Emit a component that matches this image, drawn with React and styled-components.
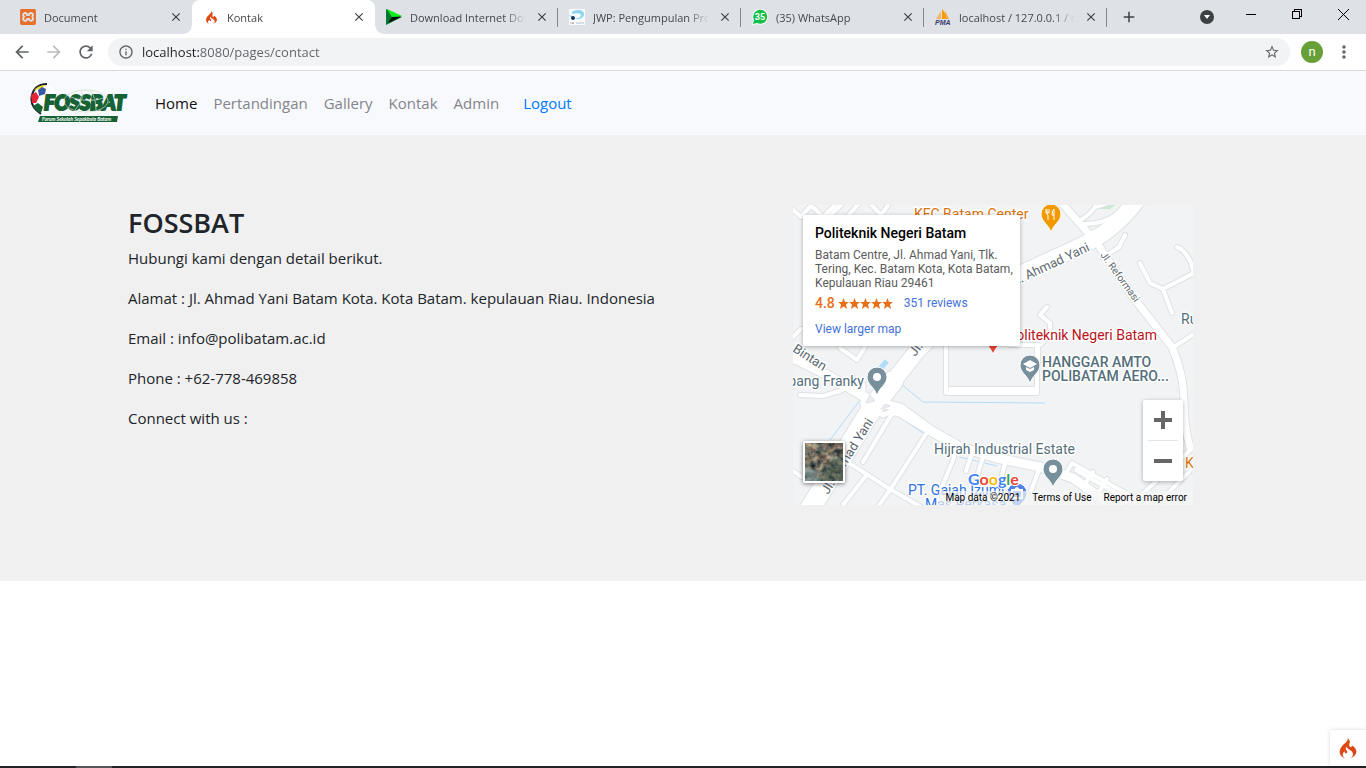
import React from "react";
import styled, { createGlobalStyle, css } from "styled-components";
import { SiCodeigniter, SiXampp } from "react-icons/si";
import {
  MdArrowBack,
  MdArrowForward,
  MdRefresh,
  MdInfoOutline,
  MdStarBorder,
  MdMoreVert,
  MdClose,
  MdAdd,
} from "react-icons/md";

const ui = '"Open Sans", "Noto Sans", sans-serif';
const mapFont = 'Roboto, "Liberation Sans", sans-serif';

const GlobalStyle = createGlobalStyle`
  *, *::before, *::after { box-sizing: border-box; }
  body { margin: 0; background: #fff; font-family: ${ui}; color: #212529; }
  button { padding: 0; border: 0; background: none; font: inherit; color: inherit; cursor: pointer; }
  a { text-decoration: none; }
  h1, p { margin: 0; }
`;

const Page = styled.div`
  display: flex;
  flex-direction: column;
  min-height: 100vh;
`;

/* ---------- browser frame ---------- */

const TabStrip = styled.div`
  display: flex;
  height: 34px;
  padding-left: 9px;
  background: #dee1e6;
`;

const Tab = styled.div`
  position: relative;
  display: flex;
  align-items: center;
  flex: 0 1 183px;
  min-width: 0;
  gap: 8px;
  padding: 0 8px 0 11px;
  font-size: 11px;
  color: #45484c;
  ${(p) =>
    p.$divided &&
    css`
      &::after {
        content: "";
        position: absolute;
        right: 0;
        top: 8px;
        width: 1px;
        height: 19px;
        background: #85888d;
      }
    `}
  ${(p) =>
    p.$active &&
    css`
      background: #fff;
      border-radius: 8px 8px 0 0;
      &::before,
      &::after {
        content: "";
        position: absolute;
        bottom: 0;
        width: 8px;
        height: 8px;
      }
      &::before {
        left: -8px;
        background: radial-gradient(circle at 0 0, transparent 7px, #fff 8px);
      }
      &::after {
        right: -8px;
        background: radial-gradient(circle at 100% 0, transparent 7px, #fff 8px);
      }
    `}
`;

const Favicon = styled.span`
  display: flex;
  flex: none;
  align-items: center;
  justify-content: center;
  width: 16px;
  height: 16px;
  font-size: ${(p) => p.$size || 16}px;
  color: ${(p) => p.$color || "inherit"};
`;

const TabTitle = styled.span`
  flex: 1;
  min-width: 0;
  overflow: hidden;
  white-space: nowrap;
  mask-image: linear-gradient(90deg, #000 calc(100% - 22px), transparent);
`;

const TabClose = styled.button`
  display: flex;
  flex: none;
  align-items: center;
  justify-content: center;
  width: 16px;
  height: 16px;
  font-size: 14px;
  color: #3c4043;
`;

const StripButton = styled.button`
  display: flex;
  align-items: center;
  justify-content: center;
  width: ${(p) => p.$width}px;
  height: ${(p) => p.$height || 34}px;
  font-size: 18px;
  color: #3c4043;
`;

const WindowControls = styled.div`
  display: flex;
  margin-left: auto;
`;

const Toolbar = styled.div`
  display: flex;
  align-items: center;
  height: 37px;
  padding: 0 6px;
  background: #fff;
  border-bottom: 1px solid #dadce0;
`;

const ToolButton = styled.button`
  display: flex;
  align-items: center;
  justify-content: center;
  width: 32px;
  height: 28px;
  font-size: 20px;
  color: ${(p) => (p.$faded ? "#babcbe" : "#5f6368")};
`;

const Omnibox = styled.div`
  display: flex;
  align-items: center;
  flex: 1;
  gap: 8px;
  height: 28px;
  margin-left: 6px;
  padding: 0 10px;
  border-radius: 14px;
  background: #f1f3f4;
  color: #5f6368;
  font-size: 16px;
`;

const Address = styled.input`
  flex: 1;
  min-width: 0;
  padding: 0;
  border: 0;
  outline: 0;
  font: 13px/20px ${ui};
  color: transparent;
  background: linear-gradient(90deg, #202124 57px, #5f6368 57px);
  background-clip: text;
`;

const Avatar = styled.button`
  width: 22px;
  height: 22px;
  margin: 0 5px 0 11px;
  border-radius: 50%;
  background: #689f38;
  color: #fff;
  font: 13px/20px ${mapFont};
`;

/* ---------- site ---------- */

const Navbar = styled.nav`
  display: flex;
  align-items: center;
  gap: 24px;
  height: 64px;
  padding: 0 30px;
  background: #f8f9fc;
`;

const NavList = styled.div`
  display: flex;
  gap: 16px;
`;

const NavLink = styled.a`
  font-size: 15px;
  line-height: 24px;
  color: ${(p) => p.$color || "#84858a"};
`;

const Contact = styled.main`
  padding: 70px 0 76px;
  background: #f0f0f0;
`;

const Container = styled.div`
  display: grid;
  grid-template-columns: 7fr 5fr;
  max-width: 1140px;
  margin: 0 auto;
`;

const Column = styled.div`
  min-width: 0;
  padding: 0 15px;
`;

const Heading = styled.h1`
  margin-bottom: 6px;
  font-size: 27px;
  font-weight: 600;
  line-height: 35px;
`;

const Line = styled.p`
  margin-bottom: 16px;
  font-size: 15px;
  line-height: 24px;
`;

const MapFrame = styled.section`
  position: relative;
  max-width: 400px;
  height: 300px;
  overflow: hidden;
  background: #f1f3f5;
  font-family: ${mapFont};
  & > svg {
    display: block;
  }
`;

const PlaceCard = styled.div`
  position: absolute;
  top: 10px;
  left: 10px;
  width: 217px;
  height: 131px;
  padding: 9px 0 0 12px;
  background: #fff;
  border-radius: 2px;
  box-shadow: 0 1px 4px rgba(0, 0, 0, 0.3);
  font-size: 12px;
  line-height: 14px;
  color: #5b5b5b;
`;

const PlaceName = styled.div`
  margin-bottom: 6px;
  font-size: 14px;
  font-weight: 500;
  line-height: 18px;
  color: #000;
`;

const Rating = styled.div`
  display: flex;
  align-items: center;
  margin: 6px 0 12px;
  color: #e7711b;
  font-size: 14px;
  font-weight: 500;
  svg {
    margin: 0 11px 0 3px;
  }
`;

const MapLink = styled.a`
  font-size: 12px;
  font-weight: 400;
  color: #4272db;
`;

const ZoomControl = styled.div`
  position: absolute;
  right: 10px;
  bottom: 24px;
  width: 40px;
  background: #fff;
  border-radius: 2px;
  box-shadow: 0 1px 4px rgba(0, 0, 0, 0.3);
`;

const ZoomButton = styled.button`
  display: flex;
  align-items: center;
  justify-content: center;
  width: 100%;
  height: 40px;
`;

const Divider = styled.div`
  height: 1px;
  margin: 0 5px;
  background: #e6e6e6;
`;

const Satellite = styled.button`
  position: absolute;
  left: 10px;
  bottom: 22px;
  width: 42px;
  height: 42px;
  border: 2px solid #fff;
  border-radius: 2px;
  overflow: hidden;
  box-shadow: 0 1px 4px rgba(0, 0, 0, 0.5);
`;

const Attribution = styled.div`
  position: absolute;
  right: 0;
  bottom: 0;
  display: flex;
  gap: 12px;
  padding: 0 6px;
  background: rgba(245, 245, 245, 0.7);
  font-size: 10px;
  line-height: 14px;
  color: #000;
  a {
    color: #000;
  }
`;

const Spacer = styled.div`
  flex: 1;
`;

const DebugButton = styled.button`
  position: fixed;
  right: 0;
  bottom: 2px;
  display: flex;
  align-items: center;
  justify-content: center;
  width: 36px;
  height: 36px;
  background: #fff;
  box-shadow: 0 0 4px rgba(0, 0, 0, 0.16);
  color: #dd4814;
  font-size: 20px;
`;

const Taskbar = styled.div`
  height: 2px;
  padding-left: 76px;
  background: #232428;
  &::before {
    content: "";
    display: block;
    width: 36px;
    height: 2px;
    background: #55565a;
  }
`;

/* ---------- drawings ---------- */

const IdmIcon = () => (
  <svg width="16" height="16" viewBox="0 0 16 16">
    <path d="M0 0 16 8 0 16Z" fill="#073" />
    <path d="M1 0 16 7 6 8Z" fill="#0bf019" />
    <path d="M2 14 6 8 15 8Z" fill="#050a05" />
  </svg>
);

const JwpIcon = () => (
  <svg width="16" height="16" viewBox="0 0 16 16">
    <rect width="16" height="16" fill="#f6fbfd" />
    <path d="M3 3C6 0 15 0 15 5c0 4-5 6-9 5 4-1 6-2 6-4S7 4 3 5Z" fill="#8dd3ee" />
    <path d="M0 6l4 1 1 2-4-1Z" fill="#a8dcf0" />
    <circle cx="4" cy="9" r="2" fill="#16355c" />
    <path d="M1 14h4M7 14h8" stroke="#b9bfd6" strokeWidth="1" />
    <path d="M3 14h2" stroke="#d9855c" />
  </svg>
);

const WhatsIcon = () => (
  <svg width="16" height="16" viewBox="0 0 16 16">
    <path d="M0 16 1 11A8 8 0 1 1 5 15Z" fill="#fff" />
    <path d="M1 15 2 11A7 7 0 1 1 5 14Z" fill="#12bf4a" />
    <text x="8" y="11" textAnchor="middle" fontFamily="Roboto" fontWeight="700" fontSize="9" fill="#fff">35</text>
  </svg>
);

const PmaIcon = () => (
  <svg width="16" height="16" viewBox="0 0 16 16">
    <path d="M1 10 6 2 6 10Z" fill="#f7b563" />
    <path d="M7 0 11 5 12 10 7 10Z" fill="#f89c0e" />
    <path d="M10 1 14 10 12 10Z" fill="#f6a94a" />
    <text x="0" y="16" fontFamily="Liberation Sans" fontWeight="700" fontStyle="italic" fontSize="7" fill="#383a70">PMA</text>
  </svg>
);

const Logo = () => (
  <svg width="101" height="40" viewBox="0 0 101 40" role="img" aria-label="Fossbat logo">
    <ellipse cx="14" cy="16" rx="13" ry="15" fill="#fff" />
    <path d="M17 1Q5 1 2 12T11 31" fill="none" stroke="#1d222d" strokeWidth="2" />
    <path d="M4 7Q9 2 16 2L10 6Z" fill="#e8dd23" />
    <path d="M8 7 12 4 16 6 15 11 9 13Z" fill="#3859aa" />
    <path d="M1 12 6 9 9 14 6 20 2 20Z" fill="#e62335" />
    <path d="M3 23 8 20 13 24 11 30Q6 29 3 23Z" fill="#166235" />
    <text
      x="14"
      y="27"
      fontFamily="Lato, Liberation Sans"
      fontWeight="900"
      fontStyle="italic"
      fontSize="20"
      fill="#166235"
      stroke="#166235"
      strokeWidth="2"
    >
      FOSSBAT
    </text>
    <g fill="none" stroke="#c9dccf" strokeWidth="1" opacity="0.7">
      <ellipse cx="56" cy="18" rx="22" ry="11" />
      <path d="M36 12Q56 22 77 14M45 27Q56 14 51 7M66 27Q66 14 60 7" />
    </g>
    <path d="M10 33H88L87 39H8Z" fill="#166235" />
    <text x="12" y="38" fontFamily="Lato, Liberation Sans" fontWeight="700" fontStyle="italic" fontSize="5" fill="#fff">
      Forum Sekolah Sepakbola Batam
    </text>
  </svg>
);

const Pin = ({ x, y, color, children }) => (
  <g transform={`translate(${x} ${y})`}>
    <path d="M0 19C-2 10-10 8-10 0A10 10 0 0 1 10 0C10 8 2 10 0 19Z" fill={color} stroke="#fff" strokeWidth="1" />
    {children || <circle r="4" fill="#fff" />}
  </g>
);

const minorRoads = [
  "M-2 3 8 12 20-2M16-2 30 12 46-4M36 12 52-4M54 12 68-4M75-4 88 10 98-4",
  "M47 143 64 155 73 140",
  "M7 190 30 191 47 186Q58 181 60 172",
  "M153 140V188H244V140",
  "M157 184H244",
  "M217 140H247Q254 134 257 127V118L247 110 254 102",
  "M245 140V160",
  "M384 42Q393 46 398 58L401 68M347 58 357 78 370 84 401 68M370 84 379 108M379 143 401 129",
  "M332 30 326 42 310 53",
  "M284 17Q296 11 302 2L318-3M290 19Q318 19 330 2",
  "M70 257 97 212Q100 206 107 210L150 236Q164 244 160 255L144 294",
  "M133 229 97 285 84 303M56 258 97 284 130 303M72 272 50 300",
  "M179 248 173 266M190 252 182 278M0 266 9 272M0 132 8 124",
  "M212 258 206 282M247 262 238 286M272 270 279 258 345 295M283 265 330 292M292 279 300 267M306 287 314 274",
  "M344 294Q370 270 385 256L401 242M360 303 401 262M322 303 350 288",
];

const majorRoads = [
  { d: "M15 307 80 202 124 146 180 90 229 68 277 46 300 35Q325 21 345-6", w: 16 },
  { d: "M15 307 80 202 100 176", w: 20 },
  { d: "M266-5 304 38 340 92 379 142Q391 170 391 196T397 242", w: 7 },
  { d: "M-4 151 34 170 77 195 107 203 137 225 167 242 204 253 247 262 280 273 322 303", w: 9 },
  { d: "M70 180V200L90 210 107 203", w: 5 },
];

const MapDrawing = () => (
  <svg width="400" height="300" viewBox="0 0 400 300" role="img" aria-label="Map of Politeknik Negeri Batam">
    <path d="M303 0h20l-6 4h-14z" fill="#cfe8d5" />
    <g fill="none" stroke="#b2dcfa" strokeWidth="1">
      <path d="M107 178 130 197 252 198M67 195 37 235M97 206 130 228M166 252 204 261M0 130 12 122M285 280 330 300" />
      <path d="M94 156 87 164" strokeWidth="5" />
    </g>
    <g fill="none" strokeLinecap="round" strokeLinejoin="round">
      {minorRoads.map((d) => (
        <path key={d} d={d} stroke="#dee1e5" strokeWidth="6" />
      ))}
      {majorRoads.map((r) => (
        <path key={r.d} d={r.d} stroke="#dee1e5" strokeWidth={r.w + 2} />
      ))}
      {minorRoads.map((d) => (
        <path key={d} d={d} stroke="#fff" strokeWidth="4" />
      ))}
      {majorRoads.map((r) => (
        <path key={r.d} d={r.d} stroke="#fff" strokeWidth={r.w} />
      ))}
    </g>
    <path d="M73 198 77 190 82 196ZM88 204 92 199 97 201Z" fill="#eceef1" stroke="#dee1e5" />
    <g fontSize="14" fill="#546e7a" stroke="#fff" strokeWidth="3" strokeLinejoin="round" paintOrder="stroke">
      <text x="121" y="14" fill="#d9730d">KFC Batam Center</text>
      <text x="364" y="135" textAnchor="end" fill="#b8141b">Politeknik Negeri Batam</text>
      <g fontWeight="500">
        <text x="249" y="162">HANGGAR AMTO</text>
        <text x="249" y="176">POLIBATAM AERO...</text>
      </g>
      <text x="141" y="249">Hijrah Industrial Estate</text>
      <text x="388" y="119">Ru</text>
      <text x="392" y="263" fill="#d9730d">K</text>
      <text x="71" y="181" textAnchor="end">Simpang Franky</text>
      <g fill="#2f71e0">
        <text x="115" y="290">PT. Gajah Izumi</text>
        <text x="132" y="304">Mas Perkasa</text>
      </g>
      <g fontSize="13" fill="#5c6870">
        <text transform="translate(-1 146) rotate(33)">Bintan</text>
        <text transform="translate(219 82) rotate(-25)">Jl. Ahmad Yani</text>
        <text transform="translate(35 290) rotate(-58)">Jl. Ahmad Yani</text>
        <text transform="translate(122 152) rotate(-52)">Jl. Ahmad</text>
        <text transform="translate(307 50) rotate(54)" fontSize="10">Jl. Reformasi</text>
      </g>
    </g>
    <Pin x={258} y={9} color="#f29900">
      <path d="M-4-5V-1Q-4 1-3 1V6M-2-5V-1M-5-5V-1H-2M3 6V-5Q1-4 1 1H3" fill="none" stroke="#fff" strokeWidth="1" />
    </Pin>
    <Pin x={84} y={172} color="#78909c" />
    <Pin x={237} y={160} color="#78909c">
      <path d="M-7-1 0-5 7-1 0 3ZM-4 2 0 4 4 2V5L0 7-4 5Z" fill="#fff" />
    </Pin>
    <Pin x={260} y={264} color="#78909c" />
    <Pin x={200} y={131} color="#ea4335" />
    <Pin x={224} y={288} color="#4f83e8">
      <path d="M-5-3H5V5H-5ZM-2-3Q0-7 2-3" fill="none" stroke="#fff" strokeWidth="2" />
    </Pin>
    <text
      x="175"
      y="280"
      fontFamily="Lato"
      fontWeight="700"
      fontSize="16"
      stroke="#fff"
      strokeWidth="2"
      paintOrder="stroke"
    >
      <tspan fill="#4285f4">G</tspan>
      <tspan fill="#ea4335">o</tspan>
      <tspan fill="#fbbc05">o</tspan>
      <tspan fill="#4285f4">g</tspan>
      <tspan fill="#34a853">l</tspan>
      <tspan fill="#ea4335">e</tspan>
    </text>
  </svg>
);

const Terrain = () => (
  <svg width="38" height="38" viewBox="0 0 38 38">
    <filter id="ground" x="0" y="0" width="100%" height="100%" colorInterpolationFilters="sRGB">
      <feTurbulence type="fractalNoise" baseFrequency="0.16" numOctaves="4" seed="8" />
      <feColorMatrix values="1 0 0 0 -0.05  .8 .2 0 0 -0.07  .6 .2 .1 0 -0.07  0 0 0 0 1" />
    </filter>
    <rect width="38" height="38" filter="url(#ground)" />
    <path d="M20 22 38 12V38H12Z" fill="#2f5145" opacity="0.4" />
    <path d="M0 24 12 28 16 38H0Z" fill="#7c99a3" opacity="0.5" />
  </svg>
);

const Stars = () => (
  <svg width="55" height="11" viewBox="0 0 55 11" role="img" aria-label="5 stars">
    {[0, 11, 22, 33, 44].map((x) => (
      <path key={x} transform={`translate(${x} 0)`} d="M5.5 0 7 4H11L8 6.600 9 11 5.500 8.500 2 11 3 6.600 0 4H4Z" fill="#e7711b" />
    ))}
  </svg>
);

const tabs = [
  { title: "Document", icon: <SiXampp />, color: "#e8702a" },
  { title: "Kontak", icon: <SiCodeigniter />, color: "#dd4814", size: 13, active: true },
  { title: "Download Internet Download Manager", icon: <IdmIcon />, divided: true },
  { title: "JWP: Pengumpulan Project Akhir", icon: <JwpIcon />, divided: true },
  { title: "(35) WhatsApp", icon: <WhatsIcon />, divided: true },
  { title: "localhost / 127.0.0.1 / db | phpMyAdmin", icon: <PmaIcon />, divided: true },
];

const links = [
  { label: "Home", color: "#111" },
  { label: "Pertandingan" },
  { label: "Gallery" },
  { label: "Kontak" },
  { label: "Admin" },
];

const details = [
  "Hubungi kami dengan detail berikut.",
  "Alamat : Jl. Ahmad Yani Batam Kota. Kota Batam. kepulauan Riau. Indonesia",
  "Email : info@polibatam.ac.id",
  "Phone : +62-778-469858",
  "Connect with us :",
];

export default function App() {
  return (
    <Page>
      <GlobalStyle />
      <TabStrip>
        {tabs.map((t) => (
          <Tab key={t.title} $active={t.active} $divided={t.divided}>
            <Favicon $color={t.color} $size={t.size}>
              {t.icon}
            </Favicon>
            <TabTitle>{t.title}</TabTitle>
            <TabClose aria-label={`Close ${t.title}`}>
              <MdClose />
            </TabClose>
          </Tab>
        ))}
        <StripButton $width={44} aria-label="New tab">
          <MdAdd />
        </StripButton>
        <WindowControls>
          <StripButton $width={42} aria-label="Search tabs">
            <svg width="14" height="14" viewBox="0 0 14 14">
              <circle cx="7" cy="7" r="7" fill="#3c4043" />
              <path d="M4 5H10L7 9Z" fill="#fff" />
            </svg>
          </StripButton>
          <StripButton $width={46} $height={28} aria-label="Minimize">
            <svg width="10" height="10" viewBox="0 0 10 10">
              <path d="M0 5H10V6H0Z" fill="#000" />
            </svg>
          </StripButton>
          <StripButton $width={46} $height={28} aria-label="Restore">
            <svg width="10" height="10" viewBox="0 0 10 10" fill="#000">
              <path fillRule="evenodd" d="M0 2H8V10H0ZM1 3V9H7V3Z" />
              <path d="M2 0H10V8H8V7H9V1H3V2H2Z" />
            </svg>
          </StripButton>
          <StripButton $width={46} $height={28} aria-label="Close window">
            <svg width="11" height="11" viewBox="0 0 11 11" stroke="#000">
              <path d="M0 0 11 11M11 0 0 11" />
            </svg>
          </StripButton>
        </WindowControls>
      </TabStrip>
      <Toolbar>
        <ToolButton aria-label="Back">
          <MdArrowBack />
        </ToolButton>
        <ToolButton aria-label="Forward" $faded>
          <MdArrowForward />
        </ToolButton>
        <ToolButton aria-label="Reload">
          <MdRefresh />
        </ToolButton>
        <Omnibox>
          <MdInfoOutline />
          <Address aria-label="Address" defaultValue="localhost:8080/pages/contact" />
          <MdStarBorder />
        </Omnibox>
        <Avatar aria-label="Profile">n</Avatar>
        <ToolButton aria-label="Menu">
          <MdMoreVert />
        </ToolButton>
      </Toolbar>

      <Navbar>
        <Logo />
        <NavList>
          {links.map((l) => (
            <NavLink key={l.label} href="#" $color={l.color}>
              {l.label}
            </NavLink>
          ))}
        </NavList>
        <NavLink href="#" $color="#007bff">
          Logout
        </NavLink>
      </Navbar>

      <Contact>
        <Container>
          <Column>
            <Heading>FOSSBAT</Heading>
            {details.map((d) => (
              <Line key={d}>{d}</Line>
            ))}
          </Column>
          <Column>
            <MapFrame>
              <MapDrawing />
              <PlaceCard>
                <PlaceName>Politeknik Negeri Batam</PlaceName>
                Batam Centre, Jl. Ahmad Yani, Tlk.
                <br />
                Tering, Kec. Batam Kota, Kota Batam,
                <br />
                Kepulauan Riau 29461
                <Rating>
                  4.8
                  <Stars />
                  <MapLink href="#">351 reviews</MapLink>
                </Rating>
                <MapLink href="#">View larger map</MapLink>
              </PlaceCard>
              <Satellite aria-label="Show satellite imagery">
                <Terrain />
              </Satellite>
              <ZoomControl>
                <ZoomButton aria-label="Zoom in">
                  <svg width="18" height="18" viewBox="0 0 18 18">
                    <path d="M7 0H11V7H18V11H11V18H7V11H0V7H7Z" fill="#666" />
                  </svg>
                </ZoomButton>
                <Divider />
                <ZoomButton aria-label="Zoom out">
                  <svg width="18" height="18" viewBox="0 0 18 18">
                    <path d="M0 7H18V11H0Z" fill="#666" />
                  </svg>
                </ZoomButton>
              </ZoomControl>
              <Attribution>
                <span>Map data ©2021</span>
                <a href="#">Terms of Use</a>
                <a href="#">Report a map error</a>
              </Attribution>
            </MapFrame>
          </Column>
        </Container>
      </Contact>
      <Spacer />
      <Taskbar />
      <DebugButton aria-label="Debug toolbar">
        <SiCodeigniter />
      </DebugButton>
    </Page>
  );
}
